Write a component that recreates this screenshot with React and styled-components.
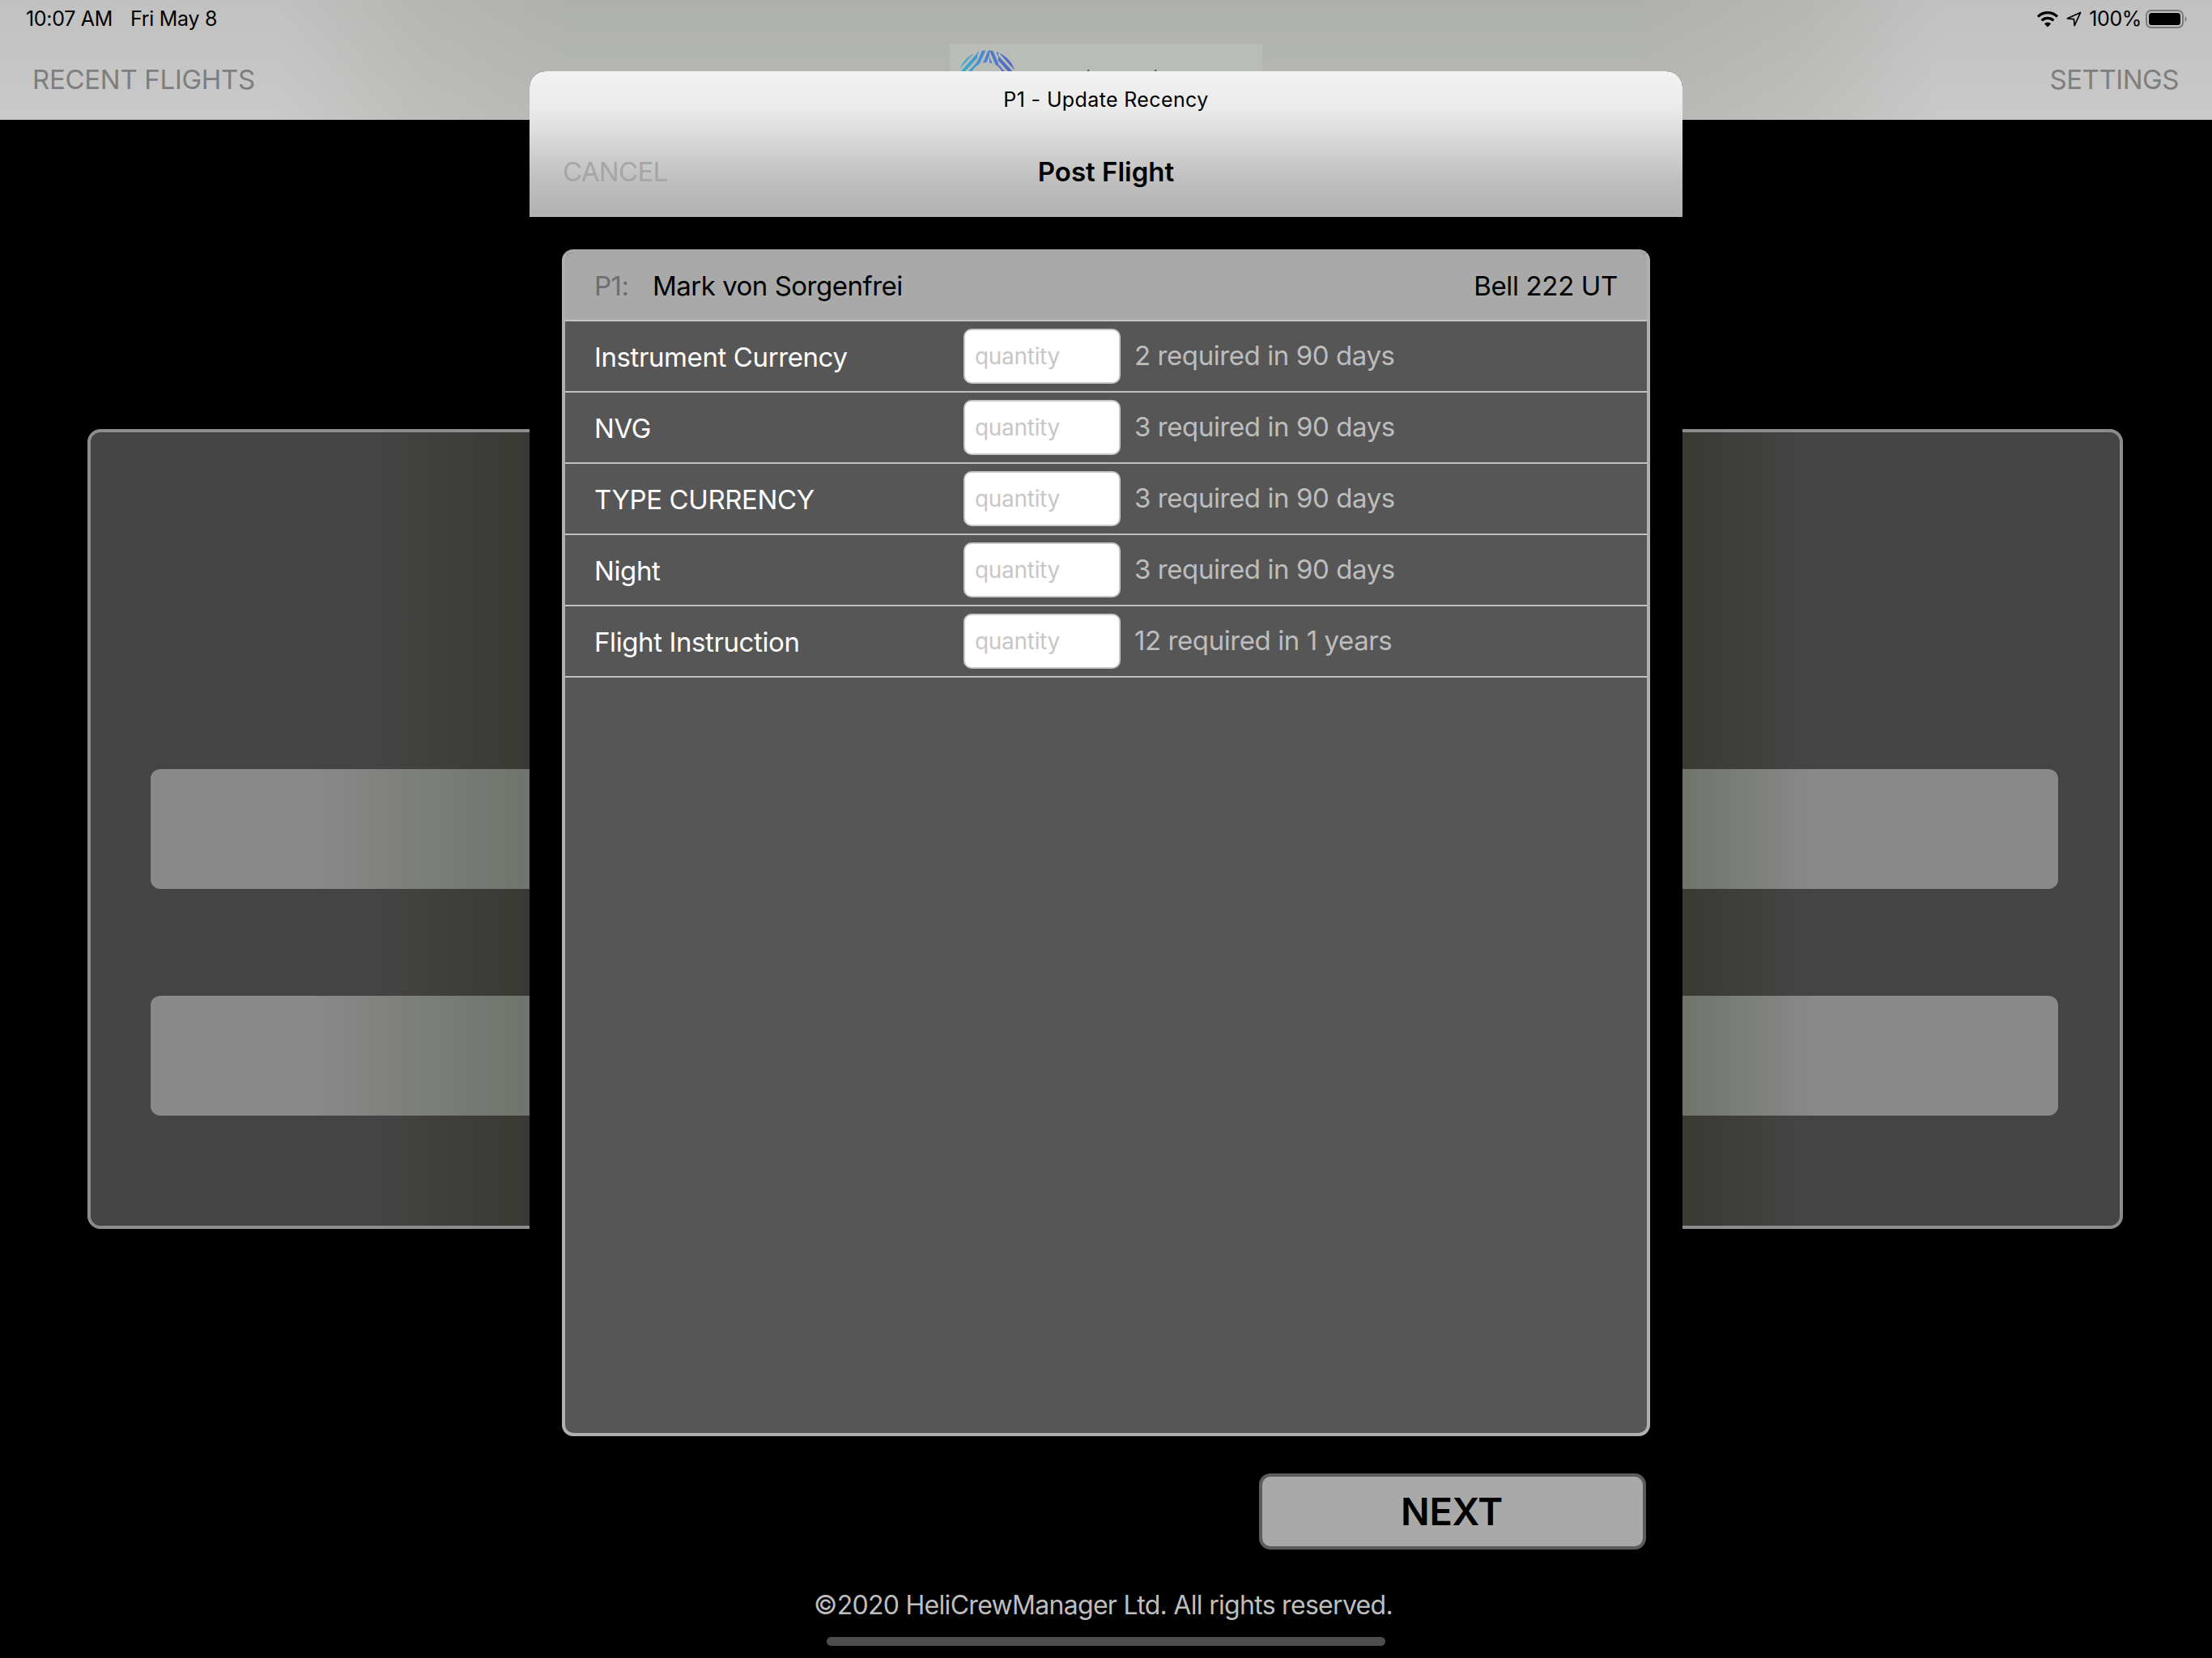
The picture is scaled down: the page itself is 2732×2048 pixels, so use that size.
import React from "react";
import styled, { createGlobalStyle } from "styled-components";

const Global = createGlobalStyle`
  html, body { margin: 0; padding: 0; background: #000; }
  * { box-sizing: border-box; }
  body { font-family: Inter, "Noto Sans", "Liberation Sans", sans-serif; }
`;

const Page = styled.div`
  position: relative;
  width: 2732px;
  height: 2048px;
  background: #000;
  overflow: hidden;
`;

const Header = styled.header`
  height: 148px;
  background:
    linear-gradient(180deg, rgba(0,0,0,.035), rgba(255,255,255,.025)),
    linear-gradient(90deg, #c8c8c8 0, #c8c8c8 340px, #bcbdba 520px, #b5b7b3 700px, #b5b7b3 2030px, #bcbdba 2220px, #c8c8c8 2400px);
`;

const StatusBar = styled.div`
  height: 46px;
  padding: 0 30px 0 32px;
  display: flex;
  align-items: center;
  justify-content: space-between;
  color: #000;
  font-size: 25px;
  letter-spacing: -0.3px;
`;

const StatusLeft = styled.div`
  display: flex;
  gap: 22px;
`;

const StatusRight = styled.div`
  display: flex;
  align-items: center;
  gap: 9px;
`;

const BatteryGroup = styled.div`
  display: flex;
  align-items: center;
  gap: 5px;
  letter-spacing: -0.4px;
`;

const NavBar = styled.div`
  height: 102px;
  padding: 0 41px 0 40px;
  display: grid;
  grid-template-columns: 1fr 386px 1fr;
`;

const NavLink = styled.div`
  align-self: center;
  justify-self: ${(p) => (p.$right ? "end" : "start")};
  padding-top: 2px;
  font-size: 33px;
  color: #7e7e7e;
  letter-spacing: ${(p) => (p.$right ? "-0.45px" : "-0.3px")};
`;

const LogoBox = styled.div`
  margin-top: 8px;
  height: 94px;
  background: #b9bcb7;
  padding: 7px 0 0 10px;
`;

const Panel = styled.section`
  margin: 382px 0 0 108px;
  width: 2514px;
  height: 988px;
  border: 4px solid #8c8c8c;
  border-radius: 16px;
  padding: 416px 76px 0 74px;
  display: flex;
  flex-direction: column;
  gap: 132px;
  background: linear-gradient(90deg, #444 0, #444 356px, #383a33 542px, #383a33 1966px, #444 2106px);
`;

const Bar = styled.div`
  height: 148px;
  border-radius: 12px;
  background: linear-gradient(90deg, #898989 0, #898989 200px, #6f746c 468px, #6f746c 1892px, #898989 2052px);
`;

const Modal = styled.div`
  position: absolute;
  left: 654px;
  top: 88px;
  width: 1424px;
  height: 1960px;
  background: #000;
  border-radius: 20px 20px 0 0;
  display: flex;
  flex-direction: column;
`;

const ModalHead = styled.div`
  height: 180px;
  flex: none;
  border-radius: 20px 20px 0 0;
  background: linear-gradient(180deg, #f2f2f2 0, #ebebeb 25%, #d0d0d0 55%, #bdbdbd 78%, #b2b1b2 100%);
`;

const HeadTitle = styled.div`
  height: 70px;
  display: flex;
  align-items: center;
  justify-content: center;
  font-size: 25px;
  letter-spacing: 0.37px;
  color: #000;
`;

const HeadNav = styled.div`
  height: 108px;
  padding: 0 41px;
  display: grid;
  grid-template-columns: 1fr auto 1fr;
  align-items: center;
`;

const Cancel = styled.div`
  font-size: 33px;
  color: #a6a6a6;
  letter-spacing: -0.7px;
`;

const HeadHeading = styled.div`
  font-size: 33px;
  font-weight: 600;
  color: #000;
`;

const ModalBody = styled.div`
  flex: 1;
  padding: 40px 40px 0;
  display: flex;
  flex-direction: column;
`;

const Card = styled.div`
  height: 1466px;
  flex: none;
  background: #565656;
  border: 4px solid #b0b0b0;
  border-top-color: #a9a9a9;
  border-radius: 14px;
  overflow: hidden;
`;

const CardHead = styled.div`
  height: 86px;
  margin-top: -1px;
  padding: 0 36px;
  display: flex;
  align-items: center;
  background: #a9a9a9;
  border-bottom: 2px solid #c4c4c4;
  font-size: 33px;
  letter-spacing: -0.5px;
  color: #000;
`;

const Role = styled.span`
  color: #6e6e6e;
  width: 72px;
`;

const Aircraft = styled.span`
  margin-left: auto;
  letter-spacing: -0.35px;
`;

const Row = styled.div`
  height: 88px;
  padding-left: 36px;
  display: grid;
  grid-template-columns: 456px 194px auto;
  align-items: center;
  border-bottom: 2px solid #c0c0c0;
`;

const Label = styled.div`
  font-size: 33px;
  letter-spacing: -0.4px;
  color: #fff;
  padding-top: 1px;
`;

const Qty = styled.input`
  width: 194px;
  height: 68px;
  padding: 0 12px;
  margin: 0;
  border: 2px solid #c9c9c9;
  border-radius: 10px;
  background: #fff;
  font-family: inherit;
  font-size: 28px;
  letter-spacing: -0.3px;
  outline: none;
  &::placeholder { color: #c7c7c7; opacity: 1; }
`;

const Required = styled.div`
  margin-left: 17px;
  padding-bottom: 2px;
  font-size: 33px;
  letter-spacing: -0.42px;
  color: #bdbdbd;
`;

const Actions = styled.div`
  margin-top: 46px;
  padding-right: 5px;
  display: flex;
  justify-content: flex-end;
`;

const NextButton = styled.button`
  width: 478px;
  height: 94px;
  border: 4px solid #5c5c5c;
  border-radius: 14px;
  background: #a9a9a9;
  color: #000;
  font-family: inherit;
  font-size: 47px;
  font-weight: 600;
  letter-spacing: -0.3px;
  padding: 0 2px 2px 0;
`;

const Copyright = styled.div`
  margin-top: 49px;
  padding-right: 7px;
  text-align: center;
  line-height: 40px;
  font-size: 32px;
  letter-spacing: -0.7px;
  color: #bebebe;
`;

const HomeBar = styled.div`
  position: absolute;
  left: 1021px;
  bottom: 15px;
  width: 690px;
  height: 11px;
  border-radius: 6px;
  background: #4d4d4d;
`;

const WifiIcon = () => (
  <svg width="28" height="21" viewBox="0 0 28 21">
    <path d="M14 20.5 L9.8 16.2 A6 6 0 0 1 18.2 16.2 Z" fill="#000" />
    <path d="M6.6 12.4 A10.6 10.6 0 0 1 21.4 12.4" fill="none" stroke="#000" strokeWidth="3.1" />
    <path d="M2 7.6 A17 17 0 0 1 26 7.6" fill="none" stroke="#000" strokeWidth="3.1" />
  </svg>
);

const LocationIcon = () => (
  <svg width="19" height="19" viewBox="0 0 19 19">
    <path d="M17.6 1.4 L1.4 8.8 L9.4 9.6 L10.2 17.6 Z" fill="none" stroke="#000" strokeWidth="1.7" strokeLinejoin="round" />
  </svg>
);

const BatteryIcon = () => (
  <svg width="52" height="23" viewBox="0 0 52 23">
    <rect x="1" y="1" width="45" height="21" rx="6" fill="none" stroke="#7a7a7a" strokeWidth="2" />
    <rect x="4" y="4" width="39" height="15" rx="3.5" fill="#000" />
    <path d="M48.5 8a4 4 0 0 1 0 7z" fill="#7a7a7a" />
  </svg>
);

// The mark's hatching leans one way on the left and the other on the right,
// easing through a steeper angle near the apex of the ring.
const hatchZones = [
  { id: "hatchA", x: 0, w: 24, angle: 42 },
  { id: "hatchB", x: 24, w: 15, angle: 24 },
  { id: "hatchC", x: 39, w: 11, angle: -24 },
  { id: "hatchD", x: 50, w: 40, angle: -42 },
];

const Logo = () => (
  <svg width="376" height="87" viewBox="0 0 376 87">
    <defs>
      <linearGradient id="hatchTone" gradientUnits="userSpaceOnUse" x1="4" y1="28" x2="72" y2="14">
        <stop offset="0" stopColor="#2fb4c6" />
        <stop offset="0.45" stopColor="#4a86d2" />
        <stop offset="1" stopColor="#4d58bf" />
      </linearGradient>
      {hatchZones.map((z) => (
        <pattern
          key={z.id}
          id={z.id}
          width="7"
          height="7"
          patternUnits="userSpaceOnUse"
          patternTransform={`rotate(${z.angle})`}
        >
          <rect width="3.8" height="7" fill="#fff" />
        </pattern>
      ))}
      <mask id="hatchMask" maskUnits="userSpaceOnUse" x="0" y="0" width="90" height="87">
        {hatchZones.map((z) => (
          <rect key={z.id} x={z.x} y="0" width={z.w} height="87" fill={`url(#${z.id})`} />
        ))}
      </mask>
    </defs>
    <path
      fillRule="evenodd"
      mask="url(#hatchMask)"
      fill="url(#hatchTone)"
      d="M0 37a36 36 0 1 0 72 0a36 36 0 1 0 -72 0z M15 37a21 21 0 1 0 42 0a21 21 0 1 0 -42 0z"
    />
    <rect x="160" y="25" width="2.5" height="4" fill="#666" />
    <rect x="243" y="25" width="2.5" height="4" fill="#666" />
  </svg>
);

const recency = [
  ["Instrument Currency", "2 required in 90 days"],
  ["NVG", "3 required in 90 days"],
  ["TYPE CURRENCY", "3 required in 90 days"],
  ["Night", "3 required in 90 days"],
  ["Flight Instruction", "12 required in 1 years"],
];

export default function App() {
  return (
    <Page>
      <Global />
      <Header>
        <StatusBar>
          <StatusLeft>
            <span>10:07 AM</span>
            <span>Fri May 8</span>
          </StatusLeft>
          <StatusRight>
            <WifiIcon />
            <LocationIcon />
            <BatteryGroup>
              <span>100%</span>
              <BatteryIcon />
            </BatteryGroup>
          </StatusRight>
        </StatusBar>
        <NavBar>
          <NavLink>RECENT FLIGHTS</NavLink>
          <LogoBox>
            <Logo />
          </LogoBox>
          <NavLink $right>SETTINGS</NavLink>
        </NavBar>
      </Header>

      <Panel>
        <Bar />
        <Bar />
      </Panel>

      <Modal>
        <ModalHead>
          <HeadTitle>P1 - Update Recency</HeadTitle>
          <HeadNav>
            <Cancel>CANCEL</Cancel>
            <HeadHeading>Post Flight</HeadHeading>
          </HeadNav>
        </ModalHead>
        <ModalBody>
          <Card>
            <CardHead>
              <Role>P1:</Role>
              <span>Mark von Sorgenfrei</span>
              <Aircraft>Bell 222 UT</Aircraft>
            </CardHead>
            {recency.map(([name, rule]) => (
              <Row key={name}>
                <Label>{name}</Label>
                <Qty placeholder="quantity" readOnly />
                <Required>{rule}</Required>
              </Row>
            ))}
          </Card>
          <Actions>
            <NextButton>NEXT</NextButton>
          </Actions>
          <Copyright>©2020 HeliCrewManager Ltd. All rights reserved.</Copyright>
        </ModalBody>
      </Modal>
      <HomeBar />
    </Page>
  );
}
